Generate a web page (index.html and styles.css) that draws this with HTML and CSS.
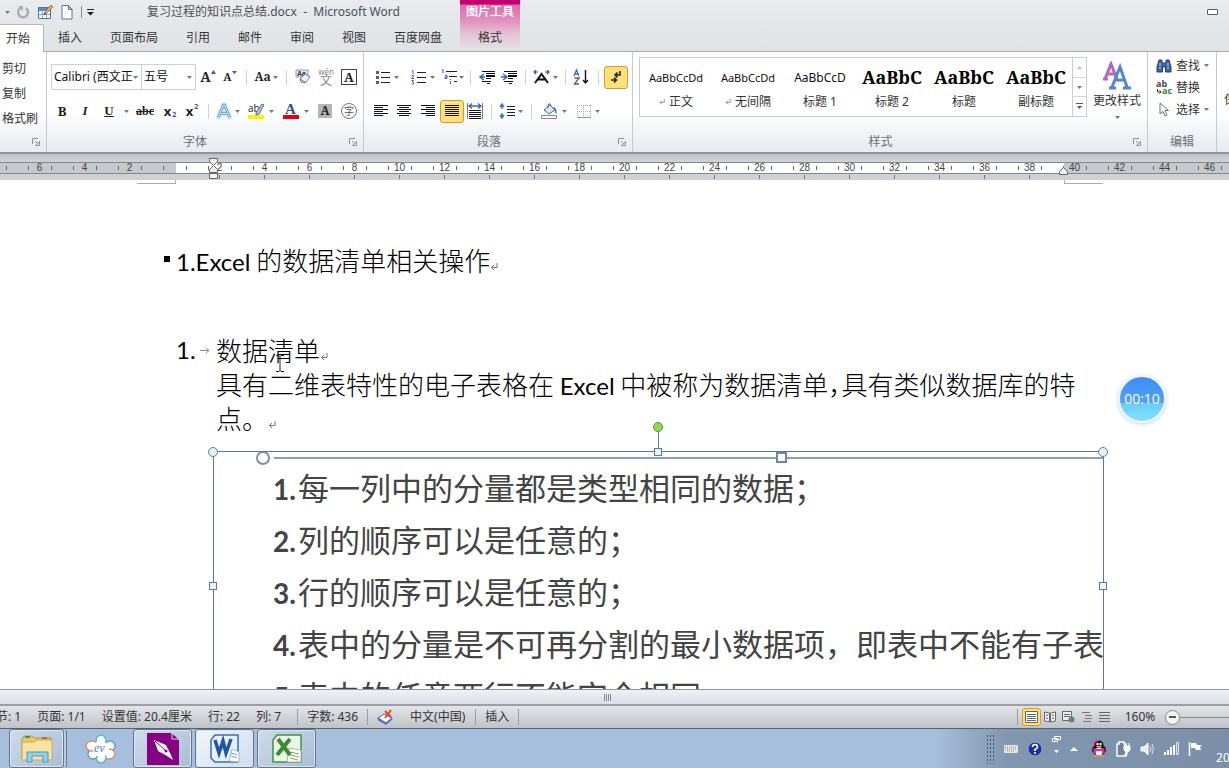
FILE: index.html
```html
<!DOCTYPE html>
<html lang="zh-CN">
<head>
<meta charset="utf-8">
<title>复习过程的知识点总结.docx - Microsoft Word</title>
<link rel="stylesheet" href="styles.css">
</head>
<body>
<svg class="defs" aria-hidden="true">
  <symbol id="dd" viewBox="0 0 5 3"><path d="M0 0h5L2.500 3z" fill="#777"/></symbol>
  <symbol id="launch" viewBox="0 0 8 8"><path d="M.5 6V.5H6M3 3l3 3M7.500 3.500v4h-4z" fill="none" stroke="#8b9099"/></symbol>
  <symbol id="ret" viewBox="0 0 8 8"><path d="M7 0v4.500H1.500M4 2L1.500 4.500 4 7" fill="none" stroke="#777"/></symbol>
</svg>
<div class="app">
  <header class="top">
    <div class="titlebar">
      <div class="quick">
        <button class="q q-dd" aria-label="撤消列表"><svg width="5" height="3"><use href="#dd"/></svg></button>
        <button class="q" aria-label="重复"><svg width="14" height="14" viewBox="0 0 14 14"><path d="M4.500 3A5 5 0 1 0 10 3.200" fill="none" stroke="#a9adb2" stroke-width="2.500"/><path d="M2 1h5v5z" fill="#a9adb2"/></svg></button>
        <button class="q" aria-label="绘制表格"><svg width="17" height="16" viewBox="0 0 17 16"><path d="M1.500 3.500h12v11h-12z" fill="#fff" stroke="#4c72a8"/><path d="M2 4h11v3H2z" fill="#5b8ed0"/><path d="M2 10.500h11M5.500 7v7M9.500 7v7" stroke="#86a9d8"/><path d="M7 9l7-8 2 2-7 7z" fill="#e0b25c" stroke="#7d5a24" stroke-width=".7"/><path d="M7 9l-.5 2L9 10z" fill="#333"/></svg></button>
        <button class="q" aria-label="新建"><svg width="12" height="15" viewBox="0 0 12 15"><path d="M1 .5h6.500l3.500 4v9.500H1z" fill="#fff" stroke="#65738a"/><path d="M7.500.5v4H11z" fill="#c4d0e2" stroke="#65738a"/></svg></button>
        <i class="vline"></i>
        <button class="q q-more" aria-label="自定义快速访问工具栏"><svg width="7" height="7" viewBox="0 0 7 7"><path d="M0 0h7v1H0zM0 3h7L3.500 6.500z" fill="#222"/></svg></button>
      </div>
      <h1 class="title">复习过程的知识点总结.docx&nbsp; -&nbsp; Microsoft Word</h1>
      <button class="min" aria-label="最小化"></button>
    </div>
    <nav class="tabs">
      <button class="tab on">开始</button><button class="tab">插入</button><button class="tab">页面布局</button><button class="tab">引用</button><button class="tab">邮件</button><button class="tab">审阅</button><button class="tab">视图</button><button class="tab">百度网盘</button>
      <div class="ctx"><span class="ctx-name">图片工具</span><button class="ctx-tab">格式</button></div>
    </nav>
  </header>

  <section class="ribbon">
    <div class="group clip">
      <div class="stack"><button>剪切</button><button>复制</button><button>格式刷</button></div>
      <div class="foot"><span class="cap"></span><svg class="launch"><use href="#launch"/></svg></div>
    </div>

    <div class="group font">
      <div class="row">
        <span class="combo face"><select aria-label="字体"><option>Calibri (西文正文)</option></select><svg class="dd"><use href="#dd"/></svg></span><span class="combo size"><select aria-label="字号"><option>五号</option></select><svg class="dd"><use href="#dd"/></svg></span>
        <button class="b w24 serif big" aria-label="增大字体">A<svg width="5" height="14" viewBox="0 0 5 14"><path d="M0 4h5L2.500 0z" fill="#3b5aa0"/></svg></button>
        <button class="b w20 serif small" aria-label="缩小字体">A<svg width="5" height="14" viewBox="0 0 5 14"><path d="M0 1h5L2.500 4z" fill="#3b5aa0"/></svg></button>
        <i class="sep"></i>
        <button class="b w28 serif aa">Aa<svg class="dd"><use href="#dd"/></svg></button>
        <i class="sep"></i>
        <button class="b w22" aria-label="清除格式"><svg width="16" height="16" viewBox="0 0 16 16"><path d="M1 1h12v7H1z" fill="#dfe8f5" stroke="#8d9db8"/><text x="2" y="7" class="t-clear">Aa</text><path d="M5 10l5-5 5 3-5 6-4-1z" fill="#f2f5fb" stroke="#6579a8"/><path d="M5 10l5 3" stroke="#6579a8"/></svg></button>
        <button class="b w24 pinyin"><small>wén</small><span>文</span></button>
        <button class="b w22 serif"><span class="boxed">A</span></button>
      </div>
      <div class="row">
        <button class="b w22 serif bold">B</button>
        <button class="b w24 serif ital">I</button>
        <button class="b w24 serif und">U</button>
        <button class="b w10" aria-label="下划线样式"><svg class="dd"><use href="#dd"/></svg></button>
        <button class="b w28 serif strike">abc</button>
        <button class="b w22 bx">x<sub>2</sub></button>
        <button class="b w22 bx">x<sup>2</sup></button>
        <i class="sep s10"></i>
        <button class="b w30" aria-label="文本效果"><svg width="16" height="17" viewBox="0 0 16 17"><path d="M2 15L7.500 2h1L14 15M5 10.500h6" fill="none" stroke="#b5d8f3" stroke-width="4"/><path d="M2 15L7.500 2h1L14 15M5 10.500h6" fill="none" stroke="#5c9fd2" stroke-width="2.500"/><path d="M2 15L7.500 2h1L14 15M5 10.500h6" fill="none" stroke="#fff" stroke-width=".8"/></svg><svg class="dd"><use href="#dd"/></svg></button>
        <button class="b w35" aria-label="突出显示"><svg width="18" height="18" viewBox="0 0 18 18"><path d="M1 13h16v4H1z" fill="#ffef00"/><text x="1" y="10" class="t-ab">ab</text><path d="M9 11l6-9 2 1-5 9-3 1z" fill="#b6c5e4" stroke="#50699c"/></svg><svg class="dd"><use href="#dd"/></svg></button>
        <button class="b w35" aria-label="字体颜色"><svg width="18" height="18" viewBox="0 0 18 18"><path d="M1 13h16v4H1z" fill="#e3000f"/><text x="3" y="12" class="t-A">A</text></svg><svg class="dd"><use href="#dd"/></svg></button>
        <button class="b w24 serif"><span class="shade">A</span></button>
        <button class="b w24"><span class="ring">字</span></button>
      </div>
      <div class="foot"><span class="cap">字体</span><svg class="launch"><use href="#launch"/></svg></div>
    </div>

    <div class="group para">
      <div class="row">
        <button class="b w35" aria-label="项目符号"><svg width="14" height="14" viewBox="0 0 14 14"><path d="M5 2.500h9M5 7.500h9M5 12.500h9" stroke="#222"/><path d="M0 1h3v3H0zM0 6h3v3H0zM0 11h3v3H0z" fill="#41619f"/></svg><svg class="dd wide"><use href="#dd"/></svg></button>
        <button class="b w35" aria-label="编号"><svg width="15" height="15" viewBox="0 0 15 15"><path d="M6 2.500h9M6 7.500h9M6 12.500h9" stroke="#222"/><path d="M1 1l1-.5V4M0.500 5.500h2v1l-2 2h2.500M.5 10.500h2l-1 1.500 1 .5v1.500h-2" fill="none" stroke="#3f62ad"/></svg><svg class="dd wide"><use href="#dd"/></svg></button>
        <button class="b w24" aria-label="多级列表"><svg width="17" height="16" viewBox="0 0 17 16"><path d="M5 2.500h11M8 7.500h8M13 12.500h3" stroke="#222"/><path d="M1 1l1-.5V4M4 6.500h2v3H4v-1.500h2M9.500 10v1M9.500 12v3" fill="none" stroke="#3f62ad"/></svg><svg class="dd"><use href="#dd"/></svg></button>
        <i class="sep"></i>
        <button class="b w22" aria-label="减少缩进量"><svg width="16" height="14" viewBox="0 0 16 14"><path d="M3 1.500h13M7 3.500h9M7 8.500h5M3 11.500h9M8 13.500h3" stroke="#111"/><path d="M7 6h9" stroke="#111" stroke-width="2"/><path d="M5 4L1 7l4 3M1 7h5" fill="none" stroke="#3f62ad" stroke-width="1.500"/></svg></button>
        <button class="b w22" aria-label="增加缩进量"><svg width="16" height="14" viewBox="0 0 16 14"><path d="M3 1.500h13M7 3.500h9M7 8.500h5M3 11.500h9M8 13.500h3" stroke="#111"/><path d="M7 6h9" stroke="#111" stroke-width="2"/><path d="M2 4l4 3-4 3M0 7h6" fill="none" stroke="#3f62ad" stroke-width="1.500"/></svg></button>
        <i class="sep s10"></i>
        <button class="b w30" aria-label="中文版式"><svg width="17" height="14" viewBox="0 0 17 14"><path d="M2 13l6.500-9 6.500 9M5 9.500h7" fill="none" stroke="#111" stroke-width="2"/><path d="M3 0L1 2l2 2M1 2h4M14 0l2 2-2 2M16 2h-4" fill="none" stroke="#3f4fa5" stroke-width="1.200"/></svg><svg class="dd"><use href="#dd"/></svg></button>
        <i class="sep s10"></i>
        <button class="b w22" aria-label="排序"><svg width="16" height="16" viewBox="0 0 16 16"><path d="M1 7l2.500-6L6 7M2 5h3" fill="none" stroke="#3569b4" stroke-width="1.300"/><path d="M1.500 9H6l-4.500 6H6" fill="none" stroke="#8a4848" stroke-width="1.300"/><path d="M12.500 1v13M10 11l2.500 3 2.500-3" fill="none" stroke="#111" stroke-width="1.400"/></svg></button>
        <i class="sep s12"></i>
        <button class="b w24 lit" aria-label="显示编辑标记"><svg width="12" height="14" viewBox="0 0 12 14"><path d="M10 1v4H5M7.500 2.500L5 5l2.500 2.500M1 10h5M4 7.500L6.500 10 4 12.500" fill="none" stroke="#222" stroke-width="1.500"/></svg></button>
      </div>
      <div class="row">
        <button class="b w22" aria-label="左对齐"><svg width="14" height="12" viewBox="0 0 14 12"><path d="M0 .5h14M0 2.500h9M0 4.500h14M0 6.500h9M0 8.500h14M0 10.500h9" stroke="#111"/></svg></button>
        <button class="b w24" aria-label="居中"><svg width="14" height="12" viewBox="0 0 14 12"><path d="M0 .5h14M2 2.500h10M0 4.500h14M2 6.500h10M0 8.500h14M2 10.500h10" stroke="#111"/></svg></button>
        <button class="b w24" aria-label="右对齐"><svg width="14" height="12" viewBox="0 0 14 12"><path d="M0 .5h14M5 2.500h9M0 4.500h14M5 6.500h9M0 8.500h14M5 10.500h9" stroke="#111"/></svg></button>
        <button class="b w24 lit" aria-label="两端对齐"><svg width="14" height="12" viewBox="0 0 14 12"><path d="M0 .5h14M0 2.500h14M0 4.500h14M0 6.500h14M0 8.500h14M0 10.500h14" stroke="#111"/></svg></button>
        <button class="b w22" aria-label="分散对齐"><svg width="16" height="16" viewBox="0 0 16 16"><path d="M.5 0v16M15.500 0v16" stroke="#777"/><path d="M2 3h12M5 .5L2 3l3 2.500M11 .5L14 3l-3 2.500" fill="none" stroke="#3f62ad" stroke-width="1.300"/><path d="M2 7.500h12M2 9.500h12M2 11.500h12M2 13.500h12M2 15.500h12" stroke="#111"/></svg></button>
        <i class="sep s10"></i>
        <button class="b w30" aria-label="行距"><svg width="16" height="16" viewBox="0 0 16 16"><path d="M3 1v5M3 10v5M1 4l2-3 2 3M1 12l2 3 2-3" fill="none" stroke="#3f78c4" stroke-width="1.500"/><path d="M8 3.500h8M8 6.500h8M8 9.500h8M8 12.500h8" stroke="#222"/></svg><svg class="dd"><use href="#dd"/></svg></button>
        <i class="sep s10"></i>
        <button class="b w35" aria-label="底纹"><svg width="17" height="16" viewBox="0 0 17 16"><path d="M3 7l6-5 5 5-6 4z" fill="#dbe7f6" stroke="#48658e"/><path d="M7 5V1.500q2-2 3 1" fill="none" stroke="#48658e"/><path d="M12 4q4 0 3.500 7-2-1-1.500-4z" fill="#3e6fb4"/><path d="M.5 12.500h15v3H.5z" fill="#fff" stroke="#888"/></svg><svg class="dd"><use href="#dd"/></svg></button>
        <button class="b w35" aria-label="边框"><svg width="14" height="13" viewBox="0 0 14 13"><path d="M.5 0v12M6.500 0v12M13.500 0v12M0 .5h14M0 6.500h14" stroke="#aaa" stroke-dasharray="1 1"/><path d="M0 12.500h14" stroke="#999"/></svg><svg class="dd wide"><use href="#dd"/></svg></button>
      </div>
      <div class="foot"><span class="cap">段落</span><svg class="launch"><use href="#launch"/></svg></div>
    </div>

    <div class="group styles">
      <div class="styles-body">
        <div class="gallery">
          <button class="card"><span class="demo">AaBbCcDd</span><span class="name"><svg width="6" height="6"><use href="#ret"/></svg>正文</span></button>
          <button class="card"><span class="demo">AaBbCcDd</span><span class="name"><svg width="6" height="6"><use href="#ret"/></svg>无间隔</span></button>
          <button class="card"><span class="demo d13">AaBbCcD</span><span class="name">标题 1</span></button>
          <button class="card"><span class="demo head">AaBbC</span><span class="name">标题 2</span></button>
          <button class="card"><span class="demo head">AaBbC</span><span class="name">标题</span></button>
          <button class="card"><span class="demo head">AaBbC</span><span class="name">副标题</span></button>
          <div class="scroll">
            <button aria-label="上一行"><svg width="5" height="3" viewBox="0 0 5 3"><path d="M0 3h5L2.500 0z" fill="#bbb"/></svg></button>
            <button aria-label="下一行"><svg width="5" height="3"><use href="#dd"/></svg></button>
            <button aria-label="其他"><svg width="7" height="7" viewBox="0 0 7 7"><path d="M0 0h7v1H0zM1 3h5L3.500 6z" fill="#555"/></svg></button>
          </div>
        </div>
        <button class="change"><svg width="30" height="30" viewBox="0 0 30 30"><path d="M3 18L9 3l6 15M5 13h8M1 18h5" fill="none" stroke="#b565bd" stroke-width="3"/><path d="M10 26L18 6l7 20M13 19h10M7 27h7M21 27h8" fill="none" stroke="#4f87d0" stroke-width="3"/></svg><span>更改样式</span><svg class="dd"><use href="#dd"/></svg></button>
      </div>
      <div class="foot"><span class="cap">样式</span><svg class="launch"><use href="#launch"/></svg></div>
    </div>

    <div class="group edit">
      <div class="tools">
        <button><svg width="16" height="14" viewBox="0 0 16 14"><path d="M3 1h3v3h4V1h3l2 7v5H9.500V8h-3v5H1V8z" fill="#3b62a6" stroke="#223f78"/><path d="M3 9h2M11 9h2M4 4v3M12 4v3" stroke="#cfe0f7"/></svg>查找<svg class="dd"><use href="#dd"/></svg></button>
        <button><svg width="16" height="15" viewBox="0 0 16 15"><text x="0" y="7" class="t-r1">ab</text><text x="6" y="14" class="t-r2">ac</text><path d="M1.500 9v3H5M3.500 10.500L5 12l-1.500 1.500" fill="none" stroke="#333"/></svg>替换</button>
        <button><svg width="16" height="15" viewBox="0 0 16 15"><path d="M4 1v11l3-2.500 2 4.500 2-1-2-4.500h3.500z" fill="#fff" stroke="#667187"/></svg>选择<svg class="dd"><use href="#dd"/></svg></button>
      </div>
      <div class="foot"><span class="cap">编辑</span></div>
    </div>
    <div class="group next"><button>保存到</button></div>
  </section>

  <div class="ruler">
    <div class="scale">
      <span></span><span>6</span><span>4</span><span>2</span><span class="zero"></span><span>2</span><span>4</span><span>6</span><span>8</span><span>10</span><span>12</span><span>14</span><span>16</span><span>18</span><span>20</span><span>22</span><span>24</span><span>26</span><span>28</span><span>30</span><span>32</span><span>34</span><span>36</span><span>38</span><span>40</span><span>42</span><span>44</span><span>46</span><span></span>
    </div>
    <div class="stops"></div>
    <svg class="indent" width="11" height="22" viewBox="0 0 11 22"><path d="M1.500.5h8v3l-4 4-4-4z" fill="#eee" stroke="#666"/><path d="M1.500 14.500v-3l4-4 4 4v3z" fill="#eee" stroke="#666"/><path d="M1.500 15.500h8v5h-8z" fill="#f4f4f4" stroke="#666"/></svg>
    <svg class="right-indent" width="11" height="9" viewBox="0 0 11 9"><path d="M1.500 8.500v-3l4-4 4 4v3z" fill="#eee" stroke="#666"/></svg>
  </div>

  <main class="doc">
    <i class="crop left"></i><i class="crop right"></i>
    <h2 class="line heading"><i class="bullet"></i><span class="lat">1.Excel</span> 的数据清单相关操作<svg class="ret" width="8" height="8"><use href="#ret"/></svg></h2>
    <div class="item">
      <div class="line num"><span class="lat">1.</span><svg width="10" height="7" viewBox="0 0 10 7"><path d="M0 3.500h9M6 1l3 2.500L6 6" fill="none" stroke="#888"/></svg></div>
      <div>
        <p class="line">数据清单<svg class="ret" width="8" height="8"><use href="#ret"/></svg><svg class="ibeam" width="8" height="17" viewBox="0 0 8 17"><path d="M0 .5h3l1 1 1-1h3M4 1v15M0 16.500h3l1-1 1 1h3" fill="none" stroke="#222"/></svg></p>
        <p class="line">具有二维表特性的电子表格在 <span class="lat">Excel</span> 中被称为数据清单<span class="half">，</span>具有类似数据库的特<br>点。<svg class="ret" width="8" height="8"><use href="#ret"/></svg></p>
      </div>
    </div>
    <figure class="picture">
      <div class="shot">
        <div class="bar"><i class="o"></i><i class="rule"></i><i class="sq"></i></div>
        <p><b>1.</b>每一列中的分量都是类型相同的数据；</p>
        <p><b>2.</b>列的顺序可以是任意的；</p>
        <p><b>3.</b>行的顺序可以是任意的；</p>
        <p><b>4.</b>表中的分量是不可再分割的最小数据项，即表中不能有子表</p>
        <p><b>5.</b>表中的任意两行不能完全相同。</p>
      </div>
      <i class="h dot tl"></i><i class="h dot tr"></i><i class="h sqr tm"></i><i class="h sqr ml"></i><i class="h sqr mr"></i><i class="stem"></i><i class="h dot rot"></i>
    </figure>
    <div class="timer">00:10</div>
  </main>

  <div class="hscroll"><i></i></div>

  <footer class="status">
    <span class="s-sec">节: 1</span><span>页面: 1/1</span><span>设置值: 20.4厘米</span><span>行: 22</span><span class="col">列: 7</span>
    <i class="bar-sep"></i><span class="words">字数: 436</span><i class="bar-sep"></i>
    <svg class="proof" width="17" height="16" viewBox="0 0 17 16"><path d="M1 9l6-4 8 4-6 5z" fill="#fff" stroke="#4466a5"/><path d="M1 9v2l8 4.500 6-5V9l-6 5z" fill="#5b83c7" stroke="#4466a5" stroke-width=".7"/><path d="M8 2l6 6M14 1L8 9" stroke="#e0442e" stroke-width="2"/></svg>
    <span class="lang">中文(中国)</span><i class="bar-sep"></i><span class="ins">插入</span><i class="bar-sep"></i>
    <div class="views">
      <i class="bar-sep"></i>
      <button class="lit" aria-label="页面视图"><svg width="13" height="12" viewBox="0 0 13 12"><path d="M.5.5h12v11H.5z" fill="#fff" stroke="#666"/><path d="M2 3.500h9M2 5.500h9M2 7.500h9M2 9.500h9" stroke="#666"/></svg></button>
      <button aria-label="阅读版式"><svg width="12" height="12" viewBox="0 0 12 12"><path d="M.5 1l5 1v9l-5-1zM11.500 1l-5 1v9l5-1z" fill="#eee" stroke="#666"/><path d="M2 4l2 .5M2 7l2 .5M10 4l-2 .5M10 7l-2 .5" stroke="#666"/></svg></button>
      <button aria-label="Web 版式"><svg width="13" height="12" viewBox="0 0 13 12"><path d="M.5.5h9v9h-9z" fill="#eee" stroke="#666"/><path d="M2 3.500h6M2 5.500h6" stroke="#666"/><circle cx="9.500" cy="8.500" r="3" fill="#63817f"/></svg></button>
      <button aria-label="大纲"><svg width="11" height="10" viewBox="0 0 11 10"><path d="M1 .5h8M4 3.500h7M4 6.500h7M2 9.500h8" stroke="#777"/></svg></button>
      <button aria-label="草稿"><svg width="11" height="11" viewBox="0 0 11 11"><path d="M0 .5h11M0 3.500h11M0 6.500h11M0 9.500h11" stroke="#666"/></svg></button>
      <button class="pct">160%</button>
      <button class="minus" aria-label="缩小"></button>
      <div class="track"><input type="range" min="10" max="310" value="160" aria-label="显示比例"></div>
    </div>
  </footer>

  <div class="taskbar">
    <button class="task pile" aria-label="资源管理器"><svg width="34" height="30" viewBox="0 0 34 30"><path d="M2 5l2-3h8l2 2h17v21H2z" fill="#e9c765" stroke="#b99442"/><path d="M5 2h5v2H5z" fill="#3c9b4b"/><path d="M22 3h5v2h-5z" fill="#d4583f"/><path d="M2 8h12l3-2h15v20H2z" fill="#f8e3a0" stroke="#cba95a"/><path d="M7 28V18h21v10h-5v-6H12v6z" fill="#8fd0ec" stroke="#4c98c4"/></svg></button>
    <button class="task plain" aria-label="EV录屏"><svg width="32" height="30" viewBox="0 0 32 30"><g fill="#fff" stroke-width="1.500"><ellipse cx="16" cy="7" rx="5" ry="6" stroke="#57bcc0"/><ellipse cx="25" cy="12" rx="5" ry="5" stroke="#4aa9c4"/><ellipse cx="24" cy="20" rx="6" ry="5" stroke="#dd8d62"/><ellipse cx="16" cy="23" rx="5" ry="6" stroke="#57bcc0"/><ellipse cx="8" cy="20" rx="5" ry="5" stroke="#4aa9c4"/><ellipse cx="7" cy="12" rx="6" ry="5" stroke="#dd8d62"/></g><circle cx="16" cy="15" r="8" fill="#fff"/><text x="9" y="18" class="t-ev">ev</text></svg></button>
    <button class="task" aria-label="画笔"><svg width="32" height="32" viewBox="0 0 32 32"><path d="M0 0h24l8 7v25H0z" fill="#850083"/><path d="M25 0v6h7z" fill="#850083" stroke="#e9d5ee"/><path d="M7 7l12 5 5 10 2 5-6-4-9-5z" fill="#fff"/><path d="M8 8l11 10" stroke="#850083"/><circle cx="19" cy="18" r="1.500" fill="#850083"/></svg></button>
    <button class="task active" aria-label="Word"><svg width="30" height="30" viewBox="0 0 30 30"><path d="M5 1h23v27H5L1 24V6z" fill="#e8f0fb" stroke="#3c6cb4" stroke-width="1.500"/><path d="M22 15l7 3v10l-10-1z" fill="#fff" stroke="#a4b5d0"/><path d="M21 19l6 2M21 22l6 2" stroke="#7e9ccb"/><path d="M5 6l4 13 4-12 3 12 5-14" fill="none" stroke="#2156a5" stroke-width="3.500"/></svg></button>
    <button class="task" aria-label="Excel"><svg width="30" height="30" viewBox="0 0 30 30"><path d="M5 1h24v27H1V6z" fill="#eaf5e6" stroke="#43904a" stroke-width="1.500"/><path d="M17 14l12 2v12H15z" fill="#fff" stroke="#9abf98"/><path d="M18 18l9 2M18 21l9 2M18 24l8 2" stroke="#70a86c"/><path d="M6 5l12 16M18 5L5 21" stroke="#3d8b35" stroke-width="4"/></svg></button>
    <div class="tray">
      <i class="grip"></i>
      <svg width="14" height="8" viewBox="0 0 14 8"><rect width="14" height="8" rx="1" fill="#e7e5e2"/><path d="M1 2h12M1 4h12M3 6h8" stroke="#8d8d8d" stroke-dasharray="1 1"/></svg>
      <svg width="16" height="16" viewBox="0 0 16 16"><circle cx="8" cy="8" r="7" fill="#1b2f9d" stroke="#93a5e8"/><path d="M5.500 6q0-2.500 2.500-2.500T10.500 6Q10.500 7.500 8 8.500V10M8 11v2" fill="none" stroke="#fff" stroke-width="1.700"/></svg>
      <svg class="lift" width="9" height="18" viewBox="0 0 9 18"><path d="M2.500.5h6v3h-6zM.5 2.500h5v3h-5z" fill="#7e93ab" stroke="#fff"/><path d="M2 14h5l-2.500 3z" fill="#fff"/></svg>
      <svg width="8" height="4" viewBox="0 0 8 4"><path d="M0 4h8L4 0z" fill="#fff"/></svg>
      <svg class="qq" width="16" height="17" viewBox="0 0 16 17"><ellipse cx="8" cy="10" rx="7" ry="5.500" fill="#111"/><circle cx="8" cy="5" r="4.500" fill="#111"/><ellipse cx="8" cy="11.500" rx="4" ry="4" fill="#fff"/><path d="M3 8q5 2 10 0l1 2q-6 2.500-12 0z" fill="#e22aa0"/><path d="M3.500 5q-1-4 4.500-4.500" fill="none" stroke="#e22aa0" stroke-width="1.500"/><path d="M3 9l-1 4 3 1V9zM13 9l1 4-3 1V9z" fill="#e22aa0"/><circle cx="6.500" cy="4" r="1.200" fill="#fff"/><circle cx="9.500" cy="4" r="1.200" fill="#fff"/><path d="M5.500 6.500h5" stroke="#ffb300" stroke-width="1.500"/><path d="M3 16h4M9 16h4" stroke="#f29b1c" stroke-width="1.500"/></svg>
      <svg width="15" height="16" viewBox="0 0 15 16"><path d="M3 1h5v2h2v12H1V3h2z" fill="#6f8298" stroke="#fff" stroke-width="1.500"/><path d="M8 5h6v4l-2 2h-2L8 9zM9 5V2M13 5V2M11 11v3H8" fill="#fff" stroke="#fff"/></svg>
      <svg width="14" height="14" viewBox="0 0 14 14"><path d="M1 5h3l4-4v12L4 9H1z" fill="#e9eef4" stroke="#fff"/><path d="M10 4q2 3 0 6M12 2q3 5 0 10" fill="none" stroke="#dfe6ee"/></svg>
      <svg width="16" height="13" viewBox="0 0 16 13"><path d="M1 10h2v3H1zM4 8h2v5H4zM7 5h2v8H7zM10 3h2v10h-2z" fill="#fff"/><path d="M13.500.5h2v12h-2z" fill="#93a5b8" stroke="#dbe2ea"/></svg>
      <svg width="15" height="15" viewBox="0 0 15 15"><path d="M1.500 1v14" stroke="#fff" stroke-width="1.500"/><path d="M3 2h5l1 2h5l-2 2 1 3H8L7 7H3z" fill="#fff"/></svg>
      <span class="clock">2018/5/20</span>
    </div>
  </div>
</div>
</body>
</html>
```

FILE: styles.css
```css
* { box-sizing: border-box; }
body {
  margin: 0;
  font: 12px/16px "Noto Sans", "Noto Sans CJK SC", sans-serif;
  color: #333;
  overflow: hidden;
}
button, select {
  font: inherit;
  color: inherit;
  border: 0;
  padding: 0;
  margin: 0;
  background: none;
  white-space: nowrap;
}
h1, h2, p, figure { margin: 0; font-weight: normal; }
svg { flex: none; display: block; }
.defs { width: 0; height: 0; position: absolute; }
.app { display: flex; flex-direction: column; height: 100vh; }

/* title bar and tabs */
.top { background: linear-gradient(#e9ebee, #dfe3e6); border-bottom: 1px solid #a9adb2; }
.titlebar { display: flex; align-items: center; height: 24px; }
.quick { display: flex; align-items: center; width: 147px; padding-left: 2px; }
.q { display: flex; align-items: center; justify-content: center; width: 22px; height: 22px; }
.q-dd, .q-more { width: 10px; }
.vline { width: 1px; height: 12px; margin: 0 3px; background: #888; }
.title { font-size: 12px; line-height: 16px; color: #4b4f55; white-space: nowrap; }
.min { width: 11px; height: 6px; margin: 0 11px 0 auto; border: 1px solid #555b66; border-radius: 1px; background: #fff; }
.tabs { display: flex; height: 27px; }
.tab { padding: 0 14px; height: 27px; }
.tab.on { margin: 0 0 -1px -8px; height: 28px; background: #fff; border: 1px solid #b5b9be; border-bottom: 0; border-radius: 2px 2px 0 0; padding: 0 13px; }
.ctx {
  display: flex; flex-direction: column; align-items: center;
  width: 60px; height: 51px; margin: -24px 0 0 4px;
  background: linear-gradient(#c4006f 0, #c4006f 4px, #dd6aab 5px, #e394c1 22px, #e3c3d6 34px, #e2e2e6 50px);
}
.ctx-name { color: #fff; line-height: 16px; padding-top: 4px; white-space: nowrap; text-shadow: 0 0 1px #fff; }
.ctx-tab { height: 27px; margin-top: 4px; }

/* ribbon */
.ribbon {
  display: flex; flex: none; height: 102px; overflow: hidden;
  background: linear-gradient(#fff 0, #fff 60%, #eceef2 90%, #e9ecf0);
  border-bottom: 2px solid #8f9297;
}
.group { display: flex; flex-direction: column; flex: none; border-right: 1px solid #c6c9ce; padding: 8px 5px 0; }
.group button { flex: none; }
.foot { display: flex; align-items: center; margin-top: auto; height: 20px; }
.cap { flex: 1; text-align: center; color: #6b7078; padding-right: 10px; }
.launch { width: 8px; height: 8px; margin-right: 1px; }
.clip { width: 47px; padding-left: 2px; padding-top: 4px; }
.stack { display: flex; flex-direction: column; align-items: flex-start; }
.stack button { height: 25px; line-height: 17px; }
.font { width: 317px; padding-left: 4px; }
.para { width: 269px; padding-left: 6px; }
.styles { width: 515px; }
.edit { width: 69px; }
.row { display: flex; align-items: center; height: 34px; }
.b { display: flex; align-items: center; justify-content: center; height: 23px; gap: 1px; }
.w10 { width: 10px; } .w20 { width: 20px; } .w22 { width: 22px; } .w24 { width: 24px; }
.w28 { width: 28px; } .w30 { width: 30px; } .w35 { width: 35px; gap: 4px; }
.w30 { gap: 3px; }
.dd { width: 5px; height: 3px; }
.sep { width: 12px; height: 15px; flex: none; background: linear-gradient(#cfd2d6, #cfd2d6) center / 1px 100% no-repeat; }
.s10 { width: 10px; }
.lit { background: #ffe07a; border: 1px solid #cb9d36; border-radius: 3px; }
.combo { display: flex; align-items: center; height: 26px; border: 1px solid #cdd0d4; background: #fff; padding: 0 3px 0 2px; flex: none; }
.combo select { appearance: none; flex: 1; min-width: 0; overflow: hidden; color: #111; outline: 0; }
.face { width: 91px; }
.size { width: 54px; border-left: 0; }
.face select { text-overflow: clip; }
.serif { font-family: "Noto Serif", "DejaVu Serif", "Liberation Serif", serif; font-weight: bold; color: #222; }
.big { font-size: 14px; gap: 0; }
.small { font-size: 11px; gap: 0; }
.aa { font-size: 12px; gap: 2px; }
.bold { font-size: 13px; }
.ital { font-size: 13px; font-style: italic; font-family: "Liberation Serif", serif; }
.und { font-size: 13px; text-decoration: underline; font-family: "Liberation Serif", serif; }
.strike { font-size: 12px; text-decoration: line-through; font-family: "Liberation Serif", serif; }
.bx { font-weight: bold; font-size: 13px; color: #222; }
.bx sub, .bx sup { font-size: 7px; line-height: 8px; color: #2f5597; vertical-align: baseline; }
.bx sub { padding-top: 8px; } .bx sup { padding-bottom: 8px; }
.pinyin { flex-direction: column; gap: 0; color: #888; }
.pinyin small { font-size: 8px; line-height: 7px; }
.pinyin span { font-size: 12px; line-height: 12px; }
.boxed { width: 16px; height: 16px; line-height: 14px; border: 1px solid #444; font-size: 13px; }
.shade { width: 14px; height: 14px; line-height: 14px; background: #b5b5b5; font-size: 12px; }
.ring { width: 16px; height: 16px; line-height: 14px; border: 1px solid #777; border-radius: 50%; font-size: 10px; color: #555; }
.t-clear { font: bold 7px "Liberation Sans", sans-serif; fill: #333; }
.t-ab { font: 10px "Open Sans", sans-serif; fill: #222; }
.t-A { font: bold 15px "Liberation Serif", serif; fill: #34518c; }
.t-r1 { font: bold 9px "Open Sans", sans-serif; fill: #444; }
.t-r2 { font: bold 9px "Open Sans", sans-serif; fill: #2c8a35; }
.t-ev { font: italic 12px "Liberation Serif", serif; fill: #4c7fd0; }

.styles { padding: 5px 5px 0; }
.styles-body { display: flex; }
.gallery { display: flex; border: 1px solid #c9ccd0; background: #fff; height: 60px; flex: none; margin-left: 1px; }
.card { width: 72px; display: flex; flex-direction: column; align-items: center; padding: 9px 5px 0; }
.demo { height: 21px; line-height: 21px; color: #111; font-size: 11px; text-align: center; }
.d13 { font-size: 12px; }
.head { font: bold 18px/21px "Noto Serif", "Liberation Serif", serif; color: #000; }
.name { display: flex; align-items: center; gap: 4px; margin-top: 6px; line-height: 16px; }
.scroll { display: flex; flex-direction: column; width: 14px; border-left: 1px solid #c9ccd0; }
.scroll button { flex: 1; display: flex; align-items: center; justify-content: center; border-bottom: 1px solid #d5d7db; }
.scroll button:last-child { border-bottom: 0; }
.group .change { flex: 1; display: flex; flex-direction: column; align-items: center; padding: 4px 0 0 5px; }
.change span { line-height: 16px; margin: 2px 0 7px; }
.edit { padding-top: 3px; }
.tools button { display: flex; align-items: center; gap: 4px; height: 21px; padding-left: 3px; }
.tools { display: flex; flex-direction: column; gap: 1px; }
.edit .cap { padding-right: 0; }
.next { width: 69px; padding: 40px 0 0 7px; border: 0; align-items: flex-start; }

/* ruler */
.ruler { position: relative; flex: none; height: 26px; padding-top: 8px; overflow: hidden; background: linear-gradient(#bfc2c7, #d0d3d7 8px, #cfd1d4); }
.scale {
  display: flex; height: 12px; overflow: hidden;
  border: solid #83868b; border-width: 1px 0;
  background: linear-gradient(90deg, #c6c9cd 176px, #fff 176px, #fff 1064px, #c6c9cd 1064px);
}
.scale span {
  flex: none; width: 45px; text-align: center; font: 10px/10px "Liberation Sans", sans-serif; color: #444;
  background: linear-gradient(#666, #666) 11px 3px / 1px 4px no-repeat, linear-gradient(#666, #666) 34px 3px / 1px 4px no-repeat;
}
.scale span:first-child { margin-left: -28px; }
.stops { height: 4px; margin: 1px 0 0 197px; width: 855px; background: repeating-linear-gradient(90deg, transparent 0 22px, #777 22px 23px, transparent 23px 45px); }
.indent { position: absolute; left: 208px; top: 4px; }
.right-indent { position: absolute; left: 1058px; top: 12px; }

/* document */
.doc {
  position: relative; flex: 1; min-height: 0; overflow: hidden; background: #fff; padding: 63px 0 0 176px;
  font: 300 26px/34px "Noto Sans CJK SC", sans-serif; color: #000;
}
.line { display: block; white-space: nowrap; font-size: 26px; line-height: 34px; font-weight: 300; position: relative; }
.lat { font: 400 24px/0 Lato, "Open Sans", sans-serif; }
.half { font-feature-settings: "halt"; }
.ret { display: inline-block; }
.bullet { position: absolute; left: -12px; top: 13px; width: 6px; height: 6px; background: #000; }
.item { display: flex; align-items: flex-start; margin-top: 56px; }
.num { display: flex; align-items: center; gap: 4px; width: 40px; height: 34px; }
.ibeam { position: absolute; left: 60px; top: 22px; }
.crop { position: absolute; top: 0; width: 39px; height: 4px; border-bottom: 1px solid #aaa; }
.crop.left { left: 137px; border-right: 1px solid #aaa; }
.crop.right { left: 1064px; border-left: 1px solid #aaa; }
.picture { position: relative; width: 891px; height: 271px; margin: 16px 0 0 37px; border: 1px solid #5b7898; }
.shot { overflow: hidden; padding-left: 59px; color: #444; font-size: 31px; line-height: 48px; white-space: nowrap; }
.shot p { height: 52px; }
.shot b { display: inline-block; width: 25px; font: 700 28px/48px Lato, sans-serif; }
.bar { display: flex; align-items: center; height: 11px; margin-left: -17px; position: relative; }
.o { width: 14px; height: 14px; border: 2px solid #8b8d99; border-radius: 50%; }
.rule { flex: 1; height: 2px; margin-left: 4px; background: #8ba0b8; }
.sq { position: absolute; left: 520px; top: 0; width: 11px; height: 11px; border: 2px solid #6f87a5; background: #fff; }
.h { position: absolute; background: #e6f3f9; border: 1px solid #5f7d98; }
.dot { width: 10px; height: 10px; border-radius: 50%; }
.sqr { width: 8px; height: 8px; }
.tl { left: -6px; top: -5px; } .tr { right: -5px; top: -5px; }
.tm { left: 440px; top: -4px; } .ml { left: -5px; top: 130px; } .mr { right: -4px; top: 130px; }
.rot { left: 439px; top: -30px; background: #8fdd4e; border-color: #5a8b45; }
.stem { position: absolute; left: 444px; top: -20px; width: 1px; height: 16px; background: #5f7d98; }
.timer {
  position: absolute; left: 1118px; top: 195px; width: 48px; height: 48px; border-radius: 50%;
  border: 2px solid #eef4fb; box-shadow: 0 1px 4px #c3cfdd;
  background: linear-gradient(#3f8cf5 0, #4ea2fb 58%, #6bcaf9 60%, #84e2fa);
  color: #fff; font: 14px/44px "Open Sans", sans-serif; text-align: center;
}

/* bottom bars */
.hscroll { display: flex; align-items: center; justify-content: center; flex: none; height: 17px; border-top: 1px solid #8b95a3; border-bottom: 2px solid #9b9ea4; background: linear-gradient(#eff1f4, #dcdfe4); }
.hscroll i { width: 8px; height: 7px; margin-right: 13px; background: repeating-linear-gradient(90deg, #888 0 1px, transparent 1px 2px); }
.status { display: flex; align-items: center; flex: none; height: 23px; overflow: hidden; white-space: nowrap; background: linear-gradient(#e3e5e8, #bfc3c8); border-bottom: 1px solid #4f6375; }
.status > span { margin-right: 16px; flex: none; }
.status .s-sec { margin-left: -4px; }
.bar-sep { width: 1px; height: 16px; background: #9a9da2; flex: none; }
.status > .words { margin: 0 9px; }
.proof { margin: 0 16px 0 9px; }
.status > .lang { margin-right: 10px; }
.status > .ins { margin: 0 9px; }
.views { display: flex; align-items: center; margin-left: auto; }
.views button { display: flex; align-items: center; justify-content: center; width: 18px; height: 18px; }
.views .lit { width: 19px; margin-left: 4px; }
.views .pct { width: 36px; margin: 0 7px 0 9px; }
.views .minus { width: 15px; height: 15px; border: 1px solid #888; border-radius: 50%; background: linear-gradient(#555, #555) center / 7px 2px no-repeat, #f3f3f3; }
.track { width: 49px; overflow: hidden; }
.track input { appearance: none; display: block; width: 130px; height: 1px; margin: 8px 0; background: #888; }
.taskbar { display: flex; flex: none; height: 39px; padding-left: 9px; gap: 3px; background: linear-gradient(90deg, #a6bfdc 0, #a6bfdc 76%, #8197af 82%, #7b90a8); }
.task { display: flex; align-items: center; justify-content: center; width: 59px; height: 39px; border: 1px solid #61758c; border-radius: 3px; background: linear-gradient(135deg, #cedbea, #a9bed6); box-shadow: inset 0 0 0 1px #dce7f3; }
.pile { width: 55px; box-shadow: inset 0 0 0 1px #dce7f3, 3px 0 0 -1px #bccde0, 4px 0 0 -1px #61758c; margin-right: 4px; }
.plain { border: 0; background: none; box-shadow: none; }
.active { background: linear-gradient(135deg, #f0f5fb, #d0deee); }
.tray { display: flex; align-items: center; gap: 9px; margin-left: auto; margin-right: -44px; color: #fff; }
.grip { width: 9px; height: 30px; background: radial-gradient(circle, #45586e 1px, transparent 1px) 0 0 / 3px 4px; }
.tray .lift { align-self: flex-start; margin-top: 7px; }
.qq { margin-left: 4px; }
.clock { align-self: flex-end; padding: 0 0 2px 4px; }
```
